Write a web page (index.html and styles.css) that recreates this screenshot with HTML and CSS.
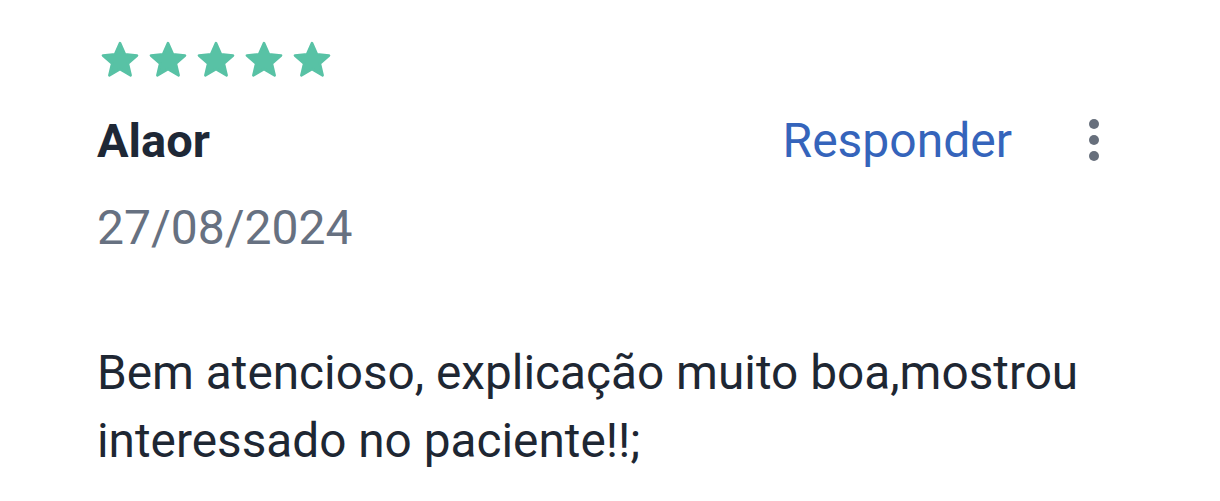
FILE: index.html
```html
<!DOCTYPE html>
<html lang="pt">
<head>
<meta charset="utf-8">
<link rel="stylesheet" href="styles.css">
</head>
<body>
<div class="review">
  <div class="stars">
    <svg class="star" viewBox="0 0 24 24"><path d="M12 2.8l2.7 6.1 6.6.6-5 4.4 1.5 6.5L12 17l-5.8 3.4 1.5-6.5-5-4.4 6.6-.6z"/></svg>
    <svg class="star" viewBox="0 0 24 24"><path d="M12 2.8l2.7 6.1 6.6.6-5 4.4 1.5 6.5L12 17l-5.8 3.4 1.5-6.5-5-4.4 6.6-.6z"/></svg>
    <svg class="star" viewBox="0 0 24 24"><path d="M12 2.8l2.7 6.1 6.6.6-5 4.4 1.5 6.5L12 17l-5.8 3.4 1.5-6.5-5-4.4 6.6-.6z"/></svg>
    <svg class="star" viewBox="0 0 24 24"><path d="M12 2.8l2.7 6.1 6.6.6-5 4.4 1.5 6.5L12 17l-5.8 3.4 1.5-6.5-5-4.4 6.6-.6z"/></svg>
    <svg class="star" viewBox="0 0 24 24"><path d="M12 2.8l2.7 6.1 6.6.6-5 4.4 1.5 6.5L12 17l-5.8 3.4 1.5-6.5-5-4.4 6.6-.6z"/></svg>
  </div>
  <div class="head">
    <div class="name">Alaor</div>
    <div class="actions">
      <span class="reply">Responder</span>
      <span class="more"><i></i><i></i><i></i></span>
    </div>
  </div>
  <div class="date">27/08/2024</div>
  <p class="text">Bem atencioso, explicação muito boa,mostrou interessado no paciente!!;</p>
</div>
</body>
</html>
```
FILE: styles.css
```css
html, body {
  margin: 0;
  background: #ffffff;
}
body {
  font-family: Roboto, "Liberation Sans", sans-serif;
}
.review {
  padding: 38px 0 0 97px;
  width: 1020px;
}
.stars {
  display: flex;
  gap: 4px;
  height: 44px;
  margin-left: 1px;
}
.star {
  width: 44px;
  height: 44px;
}
.star path {
  fill: #58c2a5;
  stroke: #58c2a5;
  stroke-width: 1.4;
  stroke-linejoin: round;
}
.head {
  display: flex;
  align-items: center;
  justify-content: space-between;
  height: 56px;
  margin-top: 30px;
}
.name {
  font-size: 47px;
  font-weight: 700;
  color: #1e2836;
}
.actions {
  display: flex;
  align-items: center;
  gap: 77px;
  margin-right: 18px;
}
.reply {
  font-size: 48px;
  color: #3564bb;
}
.more {
  display: flex;
  flex-direction: column;
  gap: 6px;
}
.more i {
  display: block;
  width: 10px;
  height: 10px;
  border-radius: 50%;
  background: #676f7c;
}
.date {
  margin-top: 32px;
  font-size: 48px;
  color: #677181;
  line-height: 56px;
}
.text {
  margin: 83px 0 0;
  font-size: 47.75px;
  line-height: 68px;
  color: #1e2733;
  width: 1020px;
}
```
